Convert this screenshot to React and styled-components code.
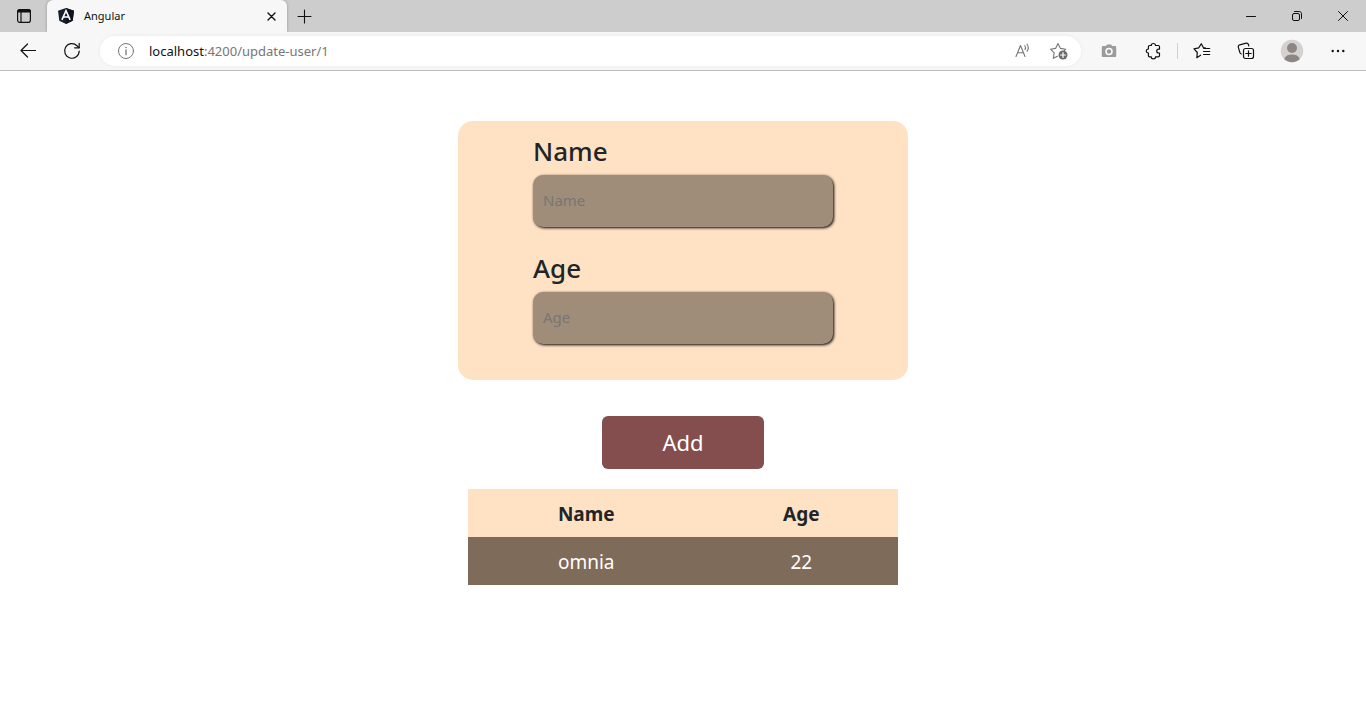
import React from "react";
import styled, { createGlobalStyle } from "styled-components";

const GlobalStyle = createGlobalStyle`
  *, *::before, *::after { box-sizing: border-box; }
  body {
    margin: 0;
    background: #fff;
    color: #212529;
    font-family: "Segoe UI", "Noto Sans", "Open Sans", sans-serif;
  }
  button, input { font-family: inherit; }
`;

const Browser = styled.header`
  border-bottom: 1px solid #bdbdbd;
  background: #f7f7f7;
`;

const TabStrip = styled.div`
  display: flex;
  height: 32px;
  background: #cdcdcd;
`;

const IconButton = styled.button`
  display: flex;
  align-items: center;
  justify-content: center;
  flex: none;
  width: ${(p) => p.$width || 44}px;
  height: 32px;
  padding: 0;
  border: 0;
  background: transparent;
  color: ${(p) => p.$color || "#111"};
`;

const Tab = styled.div`
  display: flex;
  align-items: center;
  width: 240px;
  padding-left: 11px;
  border-radius: 6px 6px 0 0;
  background: #f7f7f7;
  box-shadow: 0 0 3px rgba(0, 0, 0, 0.3);
  clip-path: inset(0 -3px 0 -3px);
`;

const TabTitle = styled.span`
  flex: 1;
  padding-left: 10px;
  font-size: 11px;
  line-height: 16px;
  color: #111;
`;

const WindowControls = styled.div`
  display: flex;
  margin-left: auto;
`;

const Toolbar = styled.nav`
  display: flex;
  align-items: center;
  height: 38px;
  padding: 0 6px;
`;

const AddressBar = styled.div`
  display: flex;
  align-items: center;
  flex: 1;
  height: 30px;
  margin: 0 6px;
  padding: 0 4px 0 8px;
  border-radius: 15px;
  background: #fff;
  box-shadow: 0 0 4px rgba(0, 0, 0, 0.06);
`;

const Url = styled.a`
  flex: 1;
  padding-left: 5px;
  font-size: 13px;
  line-height: 18px;
  color: #767676;
  text-decoration: none;
`;

const Host = styled.span`
  color: #111;
`;

const Separator = styled.span`
  width: 1px;
  height: 16px;
  margin: 0 2px;
  background: #cfcfcf;
`;

const Page = styled.main`
  display: flex;
  flex-direction: column;
  align-items: center;
  padding: 50px 16px;
`;

const Form = styled.form`
  display: flex;
  flex-direction: column;
  align-items: center;
  width: 100%;
  max-width: 450px;
`;

const Card = styled.div`
  display: flex;
  flex-direction: column;
  gap: 24px;
  width: 100%;
  padding: 13px 75px 36px;
  border-radius: 15px;
  background: #ffe2c3;
`;

const Field = styled.div`
  display: flex;
  flex-direction: column;
  gap: 7px;
`;

const Label = styled.label`
  font-size: 26px;
  font-weight: 500;
  line-height: 34px;
`;

const TextInput = styled.input`
  width: 100%;
  height: 52px;
  padding: 0 10px 2px;
  border: 0;
  border-radius: 10px;
  background: #9f8d79;
  box-shadow: 1px 1px 3px #000;
  font-size: 15px;
  color: #212529;

  &::placeholder {
    color: #797573;
    opacity: 1;
  }
`;

const AddButton = styled.button`
  width: 162px;
  height: 53px;
  margin-top: 36px;
  padding: 0 0 2px;
  border: 0;
  border-radius: 6px;
  background: #844e4e;
  color: #fff;
  font-size: 22px;
  line-height: 32px;
`;

const Users = styled.table`
  width: 100%;
  max-width: 430px;
  margin-top: 20px;
  border-collapse: collapse;
  table-layout: fixed;
  text-align: center;
  font-size: 19px;
  line-height: 28px;
`;

const HeadCell = styled.th`
  width: ${(p) => p.$width};
  padding: 11px 8px 9px;
  background: #ffe2c3;
  font-weight: 700;
`;

const Cell = styled.td`
  padding: 11px 8px 9px;
  background: #7f6b5a;
  color: #fff;
`;

const Svg = styled.svg`
  display: block;
  fill: none;
  stroke: currentColor;
  stroke-width: ${(p) => p.$weight || 1};
  stroke-linecap: round;
  stroke-linejoin: round;
`;

function Icon({ size = 16, weight, children }) {
  return (
    <Svg width={size} height={size} viewBox={`0 0 ${size} ${size}`} $weight={weight} aria-hidden="true">
      {children}
    </Svg>
  );
}

const TabActionsIcon = () => (
  <Icon weight={1.2}>
    <rect x="1.6" y="1.6" width="12.8" height="12.8" rx="2.2" />
    <path d="M1.6 4V3.8c0-1.3.9-2.2 2.2-2.2h8.4c1.3 0 2.2.9 2.2 2.2V4z" fill="currentColor" />
    <path d="M5 4v10.2" />
  </Icon>
);

const AngularIcon = () => (
  <Icon size={16}>
    <path d="M8 0l8 2.8-1.3 10L8 16l-6.7-3.2L0 2.8z" fill="#17202b" stroke="none" />
    <path d="M8 0l8 2.8-1.3 10L8 16z" fill="#0d141d" stroke="none" />
    <path d="M3.9 11.8L8 2.6l4.1 9.2M5.6 9h4.8" stroke="#fff" strokeWidth="1.6" strokeLinecap="butt" strokeLinejoin="miter" />
  </Icon>
);

const CloseTabIcon = () => (
  <Icon weight={1.4}>
    <path d="M5 5l7 7M12 5l-7 7" />
  </Icon>
);

const PlusIcon = () => (
  <Icon weight={1.1}>
    <path d="M8.5 2v13M2 8.5h13" />
  </Icon>
);

const MinimizeIcon = () => (
  <Icon>
    <path d="M3.5 8.5h9" />
  </Icon>
);

const RestoreIcon = () => (
  <Icon>
    <rect x="3.5" y="5.5" width="7" height="7" rx="1.5" />
    <path d="M5.5 3.5h4.7c1.3 0 2.3 1 2.3 2.3v4.7" />
  </Icon>
);

const CloseIcon = () => (
  <Icon>
    <path d="M3.5 3.5l9 9M12.5 3.5l-9 9" />
  </Icon>
);

const BackIcon = () => (
  <Icon size={18} weight={1.2}>
    <path d="M16.5 8.5H2M8.5 2L2 8.5 8.5 15" />
  </Icon>
);

const RefreshIcon = () => (
  <Icon size={18} weight={1.2}>
    <path d="M16.2 9A7.3 7.3 0 1 1 14 3.7L16 5.7" />
    <path d="M16.2 1.3v4.5h-4.6" />
  </Icon>
);

const InfoIcon = () => (
  <Icon size={18}>
    <circle cx="9" cy="9" r="7.5" />
    <path d="M9 8v4.7" strokeWidth="1.3" />
    <circle cx="9" cy="5.5" r=".8" fill="currentColor" stroke="none" />
  </Icon>
);

const ReadAloudIcon = () => (
  <Icon size={18} weight={1.1}>
    <path d="M2 14.5L6.5 3.5 11 14.5M3.5 10.7h6" />
    <path d="M10.8 3.7c.8 1.1.9 2.7.2 3.9M13 2.2c1.5 2.1 1.6 4.9.1 7.1" />
  </Icon>
);

const FavoriteAddIcon = () => (
  <Icon size={20} weight={1.1}>
    <path d="M8.5 15.2L4.3 17.2l.9-5.4L1.5 8.2l5-.8L9 2.5l2.5 4.9 5.2.8-1.6 1.6" />
    <circle cx="14" cy="14" r="4.5" fill="#6b6b6b" stroke="none" />
    <path d="M14 11.6v4.8M11.6 14h4.8" stroke="#fff" strokeWidth="1.2" />
  </Icon>
);

const CameraIcon = () => (
  <Icon>
    <path
      d="M5 3l1-1.5h4L11.2 3H14c.7 0 1.2.5 1.2 1.2v8.5c0 .7-.5 1.3-1.2 1.3H2c-.7 0-1.2-.6-1.2-1.3V4.2C.8 3.5 1.3 3 2 3z"
      fill="currentColor"
      stroke="none"
    />
    <circle cx="8" cy="8.4" r="3" stroke="#fff" strokeWidth="1.5" />
  </Icon>
);

const PuzzleIcon = () => (
  <Icon size={18} weight={1.2}>
    <path d="M5.7 3.5h1.6c0-1.2.9-2 2.1-2s2.1.8 2.1 2h2.7c.7 0 1.3.6 1.3 1.3v2.3h-.7c-1.2 0-2.1.8-2.1 1.9s.9 2 2.1 2h.7v2.6c0 .7-.6 1.3-1.3 1.3h-2.7c0 1.1-.9 1.9-2.1 1.9s-2.1-.8-2.1-1.9H5.7c-.7 0-1.3-.6-1.3-1.3V11C3.1 10.8 2.2 10 2.2 9s.9-1.8 2.2-2V4.8c0-.7.6-1.3 1.3-1.3z" />
  </Icon>
);

const FavoritesIcon = () => (
  <Icon size={18} weight={1.2}>
    <path d="M7.6 13.2l-3.8 2.5.5-5.2L1 6.8l4.7-.9L8.3 1.7l2 3.8 2.2.5M10.5 6.5h6.2M10.5 9.5h6.2M10.5 12.5h6.2" />
  </Icon>
);

const CollectionsIcon = () => (
  <Icon size={18} weight={1.2}>
    <rect x="6.5" y="6.5" width="10" height="10" rx="2" />
    <path d="M11.5 8.8v5.4M8.8 11.5h5.4M4.3 12c-.8-.2-1.3-.8-1.5-1.6L1.3 5.2c-.3-1.1.3-2 1.4-2.3l6.5-1.7c1-.2 1.9.3 2.2 1.3l.4 1.5" />
  </Icon>
);

const ProfileIcon = () => (
  <Icon size={24}>
    <circle cx="12" cy="12" r="11.2" fill="#d5d1ce" stroke="none" />
    <circle cx="12" cy="9" r="5" fill="#8c8785" stroke="none" />
    <path d="M4.2 20c1-3.2 4-4.5 7.8-4.5s6.8 1.3 7.8 4.5a11.2 11.2 0 0 1-15.6 0z" fill="#8c8785" stroke="none" />
  </Icon>
);

const MoreIcon = () => (
  <Icon>
    <g fill="currentColor" stroke="none">
      <circle cx="2.7" cy="8" r="1.2" />
      <circle cx="8" cy="8" r="1.2" />
      <circle cx="13.3" cy="8" r="1.2" />
    </g>
  </Icon>
);

const users = [{ name: "omnia", age: 22 }];

export default function App() {
  return (
    <>
      <GlobalStyle />
      <Browser>
        <TabStrip>
          <IconButton $width={47} aria-label="Tab actions"><TabActionsIcon /></IconButton>
          <Tab>
            <AngularIcon />
            <TabTitle>Angular</TabTitle>
            <IconButton $width={32} aria-label="Close tab"><CloseTabIcon /></IconButton>
          </Tab>
          <IconButton $width={34} aria-label="New tab"><PlusIcon /></IconButton>
          <WindowControls>
            <IconButton $width={46} aria-label="Minimize"><MinimizeIcon /></IconButton>
            <IconButton $width={46} aria-label="Restore"><RestoreIcon /></IconButton>
            <IconButton $width={46} aria-label="Close"><CloseIcon /></IconButton>
          </WindowControls>
        </TabStrip>
        <Toolbar>
          <IconButton aria-label="Back"><BackIcon /></IconButton>
          <IconButton aria-label="Refresh"><RefreshIcon /></IconButton>
          <AddressBar>
            <IconButton $width={36} $color="#767676" aria-label="Site information"><InfoIcon /></IconButton>
            <Url href="#"><Host>localhost</Host>:4200/update-user/1</Url>
            <IconButton $width={36} $color="#767676" aria-label="Read aloud"><ReadAloudIcon /></IconButton>
            <IconButton $width={36} $color="#767676" aria-label="Add to favorites"><FavoriteAddIcon /></IconButton>
          </AddressBar>
          <IconButton $color="#9b9b9b" aria-label="Screenshot"><CameraIcon /></IconButton>
          <IconButton aria-label="Extensions"><PuzzleIcon /></IconButton>
          <Separator />
          <IconButton aria-label="Favorites"><FavoritesIcon /></IconButton>
          <IconButton aria-label="Collections"><CollectionsIcon /></IconButton>
          <IconButton $width={48} aria-label="Profile"><ProfileIcon /></IconButton>
          <IconButton aria-label="Settings and more"><MoreIcon /></IconButton>
        </Toolbar>
      </Browser>
      <Page>
        <Form onSubmit={(e) => e.preventDefault()}>
          <Card>
            <Field>
              <Label htmlFor="name">Name</Label>
              <TextInput id="name" type="text" placeholder="Name" />
            </Field>
            <Field>
              <Label htmlFor="age">Age</Label>
              <TextInput id="age" type="text" placeholder="Age" />
            </Field>
          </Card>
          <AddButton type="submit">Add</AddButton>
        </Form>
        <Users>
          <thead>
            <tr>
              <HeadCell scope="col" $width="55%">Name</HeadCell>
              <HeadCell scope="col" $width="45%">Age</HeadCell>
            </tr>
          </thead>
          <tbody>
            {users.map((user) => (
              <tr key={user.name}>
                <Cell>{user.name}</Cell>
                <Cell>{user.age}</Cell>
              </tr>
            ))}
          </tbody>
        </Users>
      </Page>
    </>
  );
}
